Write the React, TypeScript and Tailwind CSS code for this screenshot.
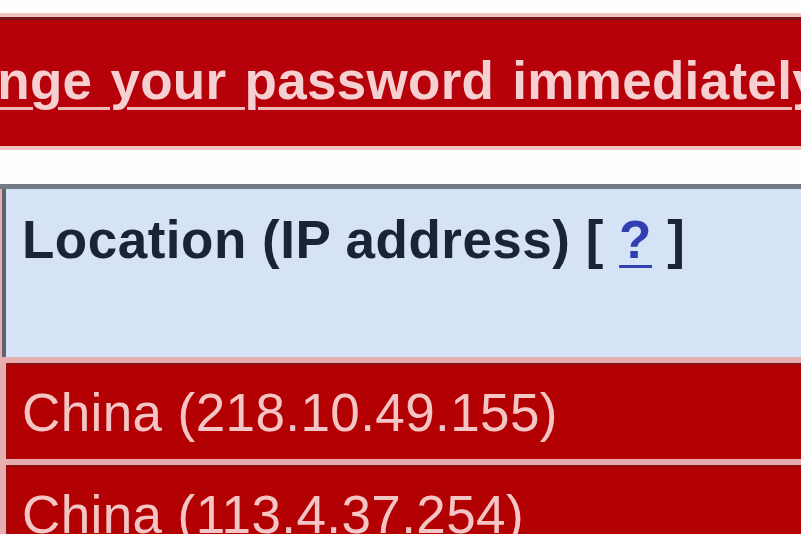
export default function App() {
  return (
    <div className="w-[801px] h-[534px] overflow-hidden bg-[#fdfdfd] pt-[13px] font-['Liberation_Sans',Arial,sans-serif]">
      {/* warning banner */}
      <div className="bg-[#f1c3c0] py-[4px]">
        <div className="h-[129px] border-t-[3px] border-[#741416] bg-[#b6000a] pt-[30px] whitespace-nowrap overflow-hidden">
          <span className="ml-[-95px] text-[53px] leading-[61px] font-bold text-[#f6cfd0] underline decoration-[3px] decoration-[#f0b8bb] underline-offset-[8px] tracking-[0.3px] [word-spacing:3px]">
            change your password immediately.
          </span>
        </div>
      </div>

      {/* activity table */}
      <div className="mt-[34px] border-t-[5px] border-[#737c86] bg-[#e6aeae] flex flex-col gap-[6px] pl-[2px]">
        <div className="h-[168px] border-l-[4px] border-[#5b6570] bg-[#d6e3f6] pl-[16px] pt-[20px]">
          <div className="text-[53px] leading-[61px] font-bold tracking-[0.5px] text-[#1b2436] whitespace-nowrap">
            Location (IP address) [ <span className="text-[#3140b0] underline decoration-[3px] underline-offset-[7px]">?</span> ]
          </div>
        </div>
        {['China (218.10.49.155)', 'China (113.4.37.254)'].map((loc) => (
          <div
            key={loc}
            className="ml-[4px] h-[96px] border-t-[2px] border-l-[2px] border-[#8c0f14] bg-[#b30003] pl-[14px] pt-[17px]"
          >
            <div className="text-[53px] leading-[61px] tracking-[0.4px] text-[#f4c5c5] whitespace-nowrap">{loc}</div>
          </div>
        ))}
      </div>
    </div>
  );
}
